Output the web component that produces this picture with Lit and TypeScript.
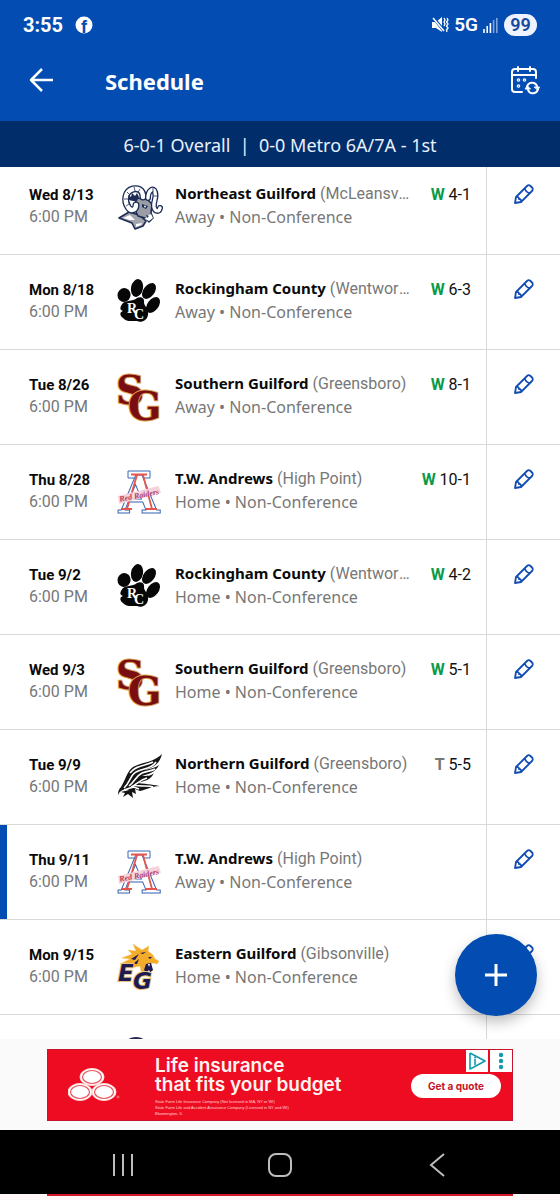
import { LitElement, html, css, svg, nothing } from "lit";
import { customElement, property } from "lit/decorators.js";

type Team = "rams" | "paw" | "sg" | "andrews" | "hawk" | "eg" | "crest";

interface Game {
  date: string;
  team: string;
  city: string;
  site: string;
  logo: Team;
  result?: string;
  score?: string;
  next?: boolean;
}

const GAMES: Game[] = [
  { date: "Wed 8/13", team: "Northeast Guilford", city: "McLeansville", site: "Away", logo: "rams", result: "W", score: "4-1" },
  { date: "Mon 8/18", team: "Rockingham County", city: "Wentworth", site: "Away", logo: "paw", result: "W", score: "6-3" },
  { date: "Tue 8/26", team: "Southern Guilford", city: "Greensboro", site: "Away", logo: "sg", result: "W", score: "8-1" },
  { date: "Thu 8/28", team: "T.W. Andrews", city: "High Point", site: "Home", logo: "andrews", result: "W", score: "10-1" },
  { date: "Tue 9/2", team: "Rockingham County", city: "Wentworth", site: "Home", logo: "paw", result: "W", score: "4-2" },
  { date: "Wed 9/3", team: "Southern Guilford", city: "Greensboro", site: "Home", logo: "sg", result: "W", score: "5-1" },
  { date: "Tue 9/9", team: "Northern Guilford", city: "Greensboro", site: "Home", logo: "hawk", result: "T", score: "5-5" },
  { date: "Thu 9/11", team: "T.W. Andrews", city: "High Point", site: "Away", logo: "andrews", next: true },
  { date: "Mon 9/15", team: "Eastern Guilford", city: "Gibsonville", site: "Home", logo: "eg" },
  { date: "Wed 9/17", team: "Southwest Guilford", city: "Kernersville", site: "Away", logo: "crest" },
];

const ART = {
  rams: svg`
    <g stroke="#1c2c55" stroke-width="1.600" stroke-linejoin="round">
      <path fill="#a2a5ad" d="M2 34 L12 28 L22 31 L29 37 L26 42 L18 45 L15 39 Z"/>
      <path fill="#9a9da6" d="M19 14 L30 15 L35 20 L34 29 L36 34 L32 38 L28 34 L21 32 L18 26 Z"/>
    </g>
    <path fill="#fff" d="M6 34 L13 31 L18 36 L13 36 Z M30 32 L34 30 L36 34 L32 37 L28 35 Z M19 40 L25 39 L24 41 L19 43 Z"/>
    <g fill="none" stroke-linecap="round">
      <path stroke="#1c2c55" stroke-width="7" d="M26 13 C26 5 20 4 16 5 C8 7 7 17 11 23 C14 28 19 26 19 21"/>
      <path stroke="#fff" stroke-width="4.400" d="M26 13 C26 5 20 4 16 5 C8 7 7 17 11 23 C14 28 19 26 19 21"/>
      <path stroke="#1c2c55" stroke-width="6" d="M31 14 C31 6 37 3 38 8 C40 14 36 17 37 23 C38 28 42 28 43 24"/>
      <path stroke="#fff" stroke-width="3.400" d="M31 14 C31 6 37 3 38 8 C40 14 36 17 37 23 C38 28 42 28 43 24"/>
      <path stroke="#1c2c55" stroke-width="0.800" stroke-linecap="butt" d="M10 8 L13 11 M17 3 L18 7 M7 15 L11 15 M9 22 L12 20 M23 5 L21 8 M36 4 L36 8 M41 12 L37 12"/>
    </g>
    <path fill="#1c2c55" d="M12 16 L11 11 L14 13 L15 9 L18 12 L20 9 L22 13 L20 17 L16 17 Z M25 20 L31 22 L29 25 L25 23 Z M29 31 L32 32 L30 34 Z"/>
    <circle cx="28" cy="22.500" r="0.900" fill="#fff"/>`,
  paw: svg`
    <g fill="#070707">
      <ellipse cx="7" cy="16" rx="6.500" ry="7" transform="rotate(20 7 16)"/>
      <ellipse cx="20" cy="9" rx="6" ry="9" transform="rotate(12 20 9)"/>
      <ellipse cx="32" cy="12" rx="5.500" ry="9" transform="rotate(38 32 12)"/>
      <ellipse cx="36" cy="26" rx="5.500" ry="9" transform="rotate(38 36 26)"/>
      <path d="M4 27 C7 20 16 23 20 19 C24 17 28 19 27 24 C28 28 32 30 31 36 C30 42 24 44 20 42 C14 42 9 43 6 39 C2 36 3 33 6 32 C3 31 3 29 4 27 Z"/>
    </g>
    <text class="rc" x="10" y="34">R</text>
    <text class="rc" x="17" y="40">C</text>`,
  sg: svg`
    <text class="block" x="-1" y="30">S</text>
    <text class="block" x="11" y="46">G</text>`,
  andrews: svg`
    <path fill="#fff" stroke="#3a68b4" d="M11 2 H33 V9 H11 Z"/>
    <text class="slab" x="22" y="44" text-anchor="middle">A</text>
    <path fill="none" stroke="#e5544f" stroke-width="1.800" d="M14 5.500 H30 M20 6 L10 40 M26 6 L35 40 M5 40 H15 M29 40 H40"/>
    <g transform="rotate(-11 22 26)">
      <path fill="#f6d3dc" d="M1 23 L43 21 L44 28 L1 31 Z"/>
      <text class="script" x="22" y="29" text-anchor="middle">Red Raiders</text>
    </g>`,
  hawk: svg`
    <path fill="#151515" d="M4 33 C9 25 10 17 16 13 C24 8 36 9 45 0 C42 12 34 14 26 16 C33 15 38 14 42 11 C38 19 31 20 25 22 C30 22 34 22 37 19 C34 26 27 27 21 29 C31 30 38 31 43 32 C34 32 29 36 23 37 L18 35 L19 40 L15 38 L16 44 L11 40 L6 43 L8 39 L4 38 C6 37 10 37 12 36 C8 34 3 36 1 41 C1 37 2 35 4 33 Z"/>
    <path fill="none" stroke="#fff" stroke-width="1.600" d="M7 34 C13 29 13 21 19 18 C26 14 35 15 39 8 M12 32 C18 27 19 22 25 19 C30 17 35 17 38 15 M14 33 C19 31 22 26 30 24 M13 19 C19 11 28 12 36 8 M17 31 C24 33 31 31 36 33 M7 36 L13 34 L17 33 L22 35"/>`,
  eg: svg`
    <path fill="#f3ab2a" stroke="#f7c769" stroke-width="0.500" d="M3 20 L13 15 L5 14 L15 10 L11 6 L19 7 L16 0 L25 6 L32 2 L31 7 L36 11 L38 15 L42 17 L40 20 L36 19 L31 21 L36 26 L31 30 L24 27 L23 22 L14 24 L14 20 Z"/>
    <path fill="#1e1b52" d="M14 15 L22 10 L18 16 Z M16 20 L22 15 L20 20 Z M23 9 L29 8 L26 10 Z M31 13 L35 13 L33 15 Z M29 20 L34 19 L36 26 L31 30 L27 26 Z"/>
    <path fill="#fff" d="M31 20 L33 20 L32 23 Z M30 28 L32 26 L33 28 Z"/>
    <text class="eg" x="1" y="37">E</text>
    <text class="eg" x="16" y="45">G</text>`,
  crest: svg`<circle cx="19" cy="13" r="15" fill="#26264f"/>`,
};

@customElement("team-logo")
class TeamLogo extends LitElement {
  @property() team: Team = "rams";

  static styles = css`
    :host { display: block; }
    .art { display: block; width: 46px; height: 46px; overflow: visible; }
    .rc { font: 700 14px "Liberation Serif", serif; fill: #fff; }
    .block {
      font: 700 39px "DejaVu Serif", serif; fill: #790e12;
      stroke: #dd9a4c; stroke-width: 2px; paint-order: stroke;
    }
    .slab {
      font: 700 53px "DejaVu Serif", serif; fill: #fff;
      stroke: #3a68b4; stroke-width: 1px;
    }
    .script { font: italic 700 8px "Liberation Serif", serif; fill: #b03a5c; }
    .eg {
      font: italic 700 23px "DejaVu Sans", sans-serif; fill: #1e1b52;
      stroke: #edc47d; stroke-width: 2px; paint-order: stroke;
    }
  `;

  render() {
    return html`<svg class="art" viewBox="0 0 46 46" aria-hidden="true">${ART[this.team]}</svg>`;
  }
}

@customElement("game-row")
class GameRow extends LitElement {
  @property({ attribute: false }) game!: Game;

  static styles = css`
    :host { display: block; }
    .row {
      display: flex; height: 95px; box-sizing: border-box;
      border-bottom: 1px solid #d9d9d9;
      font: 16px/22px Roboto, sans-serif; color: #777;
    }
    .mark { width: 7px; flex: none; }
    .mark.on { background: #024cb2; }
    .when { width: 88px; flex: none; padding: 24px 0 0 22px; }
    .date { font-size: 15px; font-weight: 700; color: #0a0a0a; }
    .logo { width: 46px; flex: none; padding: 24px 12px 0 0; }
    .info { flex: 1; min-width: 0; padding-top: 21px; }
    .line { display: flex; gap: 4px; align-items: baseline; line-height: 24px; }
    .team { flex: none; font: 700 15px/24px "Noto Sans", sans-serif; color: #0a0a0a; }
    .city { flex: 1; min-width: 0; overflow: hidden; white-space: nowrap; text-overflow: ellipsis; line-height: 24px; }
    .site { font: 16px/22px "Noto Sans", sans-serif; white-space: nowrap; }
    .score { width: 59px; flex: none; padding: 24px 15px 0 0; text-align: right; color: #111; white-space: nowrap; }
    .res { font-weight: 700; color: #777; }
    .res.win { color: #0b9a48; }
    .side { width: 74px; box-sizing: border-box; flex: none; border-left: 1px solid #d9d9d9; }
    .edit {
      display: flex; justify-content: center; width: 100%; height: 100%;
      padding: 24px 0 0; border: 0; background: none; cursor: pointer;
    }
    .pen { width: 20px; height: 20px; fill: none; stroke: #124cb3; stroke-width: 1.8; stroke-linejoin: round; stroke-linecap: round; }
  `;

  render() {
    const g = this.game;
    return html`<div class="row">
      <div class="mark ${g.next ? "on" : ""}"></div>
      <div class="when"><div class="date">${g.date}</div><div>6:00 PM</div></div>
      <team-logo class="logo" .team=${g.logo}></team-logo>
      <div class="info">
        <div class="line"><span class="team">${g.team}</span><span class="city">(${g.city})</span></div>
        <div class="site">${g.site} • Non-Conference</div>
      </div>
      <div class="score">${g.result
        ? html`<span class="res ${g.result === "W" ? "win" : ""}">${g.result}</span> ${g.score}`
        : nothing}</div>
      <div class="side">
        <button class="edit" aria-label="Edit game">
          <svg class="pen" viewBox="0 0 20 20"><path d="M1 19 L2 13 L13 2 C14 1 15.500 1 16.500 2 L18 3.500 C19 4.500 19 6 18 7 L7 18 Z M2 13 C4 12.500 5 13.500 5 15 C6.500 15 7.500 16 7 18 M10.500 4.500 C12 8 13 8.500 15.500 9.500"/></svg>
        </button>
      </div>
    </div>`;
  }
}

@customElement("app-root")
class AppRoot extends LitElement {
  static styles = css`
    :host {
      display: flex; flex-direction: column; height: 100vh; position: relative;
      background: #fff; font-family: Roboto, sans-serif;
    }
    button { font-family: inherit; border: 0; padding: 0; background: none; cursor: pointer; }
    svg { display: block; }
    .status {
      display: flex; align-items: center; height: 49px; flex: none; box-sizing: border-box;
      padding: 0 23px; background: #024cb2; color: #fff; font: 700 20px/24px Roboto, sans-serif;
    }
    .fb { width: 18px; height: 18px; margin-left: 12px; }
    .fb-f { font: 700 18px "Liberation Sans", sans-serif; fill: #024cb2; }
    .grow { flex: 1; }
    .mute { width: 17px; height: 16px; margin-right: 5px; }
    .net { font-size: 19px; font-weight: 600; }
    .bars { width: 15px; height: 16px; margin: 0 6px 0 5px; }
    .batt {
      width: 33px; height: 22px; border-radius: 11px; background: #eef3ff; color: #174a9e;
      font: 600 18px/22px Roboto, sans-serif; text-align: center;
    }
    .bar {
      display: flex; align-items: center; height: 72px; flex: none; box-sizing: border-box;
      padding: 0 20px 10px 29px; background: #024cb2; color: #fff;
    }
    .title { margin: 0; padding: 2px 0 0 51px; flex: 1; font: 700 22px/30px "Noto Sans", sans-serif; }
    .back { width: 25px; height: 24px; fill: none; stroke: #fff; stroke-width: 2.5; stroke-linejoin: round; }
    .cal { width: 30px; height: 29px; fill: none; stroke: #fff; stroke-width: 2; stroke-linecap: round; }
    .record {
      height: 46px; flex: none; background: #012d6a; color: #e9f1fb; white-space: pre;
      text-align: center; font: 18px/48px "Noto Sans", sans-serif;
    }
    .scroll { flex: 1; min-height: 0; overflow: hidden; }
    .list { list-style: none; margin: -7px 0 0; padding: 0; }
    .foot { flex: none; position: relative; background: #fafafa; padding: 10px 0 9px; }
    .fab {
      position: absolute; right: 23px; bottom: 114px; width: 82px; height: 82px; border-radius: 50%;
      background: #024cb2; display: grid; place-items: center;
      box-shadow: 0 6px 14px rgba(0, 0, 0, 0.26);
      clip-path: inset(-30px -30px -22px -30px);
    }
    .plus { width: 22px; height: 22px; stroke: #fff; stroke-width: 3; }
    .ad {
      position: relative; box-sizing: border-box; width: 466px; max-width: 100%; height: 72px; margin: 0 auto;
      display: flex; align-items: flex-start; background: #ee0c22; border: 1px solid #c9152b; color: #fff;
    }
    .farm { width: 52px; height: 34px; margin: 18px 0 0 20px; }
    .copy { flex: 1; padding: 6px 0 0 35px; white-space: nowrap; color: #fff3f1; }
    .head { margin: 0; font: 600 19px/19px Inter, sans-serif; }
    .fine { margin: 5px 0 0; font: 4px/6px "Liberation Sans", sans-serif; color: #ffd6d3; }
    .quote {
      margin: 24px 11px 0 0; width: 90px; height: 24px; border-radius: 12px; background: #fff;
      color: #c4132a; font: 700 10px/24px Inter, sans-serif;
    }
    .tags { position: absolute; top: 0; right: 0; display: flex; gap: 2px; }
    .tag { width: 22px; height: 22px; background: #fff; }
    .nav {
      display: grid; grid-template-columns: 1fr 1fr 1fr; height: 64px; flex: none; background: #000;
      box-sizing: border-box; padding: 0 44px; place-items: center; margin: 0;
    }
    .key { width: 24px; height: 24px; fill: none; stroke: #bdbdbd; stroke-width: 2; margin-top: 6px; }
    .peek { flex: none; height: 6px; background: #fdf7f7; display: flex; justify-content: center; }
    .edge { width: 466px; height: 2px; background: #d3182c; }
  `;

  render() {
    return html`
      <div class="status">
        <span>3:55</span>
        <svg class="fb" viewBox="0 0 18 18"><circle cx="9" cy="9" r="8.500" fill="#fff"/><text class="fb-f" x="6" y="17">f</text></svg>
        <span class="grow"></span>
        <svg class="mute" viewBox="0 0 17 16"><path fill="#fff" d="M0 5 H4 L10 0 V15 L4 11 H0 Z"/><path d="M1 0 L12 14" stroke="#024cb2" stroke-width="3"/><path d="M1 1 L12 14" stroke="#fff" stroke-width="1.500"/><path fill="none" stroke="#fff" stroke-width="1.300" d="M12 1 L13 3 L12 5 L13 7 L12 9 M15 1 L16 3 L14.500 5 L16 7 L14.500 9 L16 11 L14.500 13 L15 15"/></svg>
        <span class="net">5G</span>
        <svg class="bars" viewBox="0 0 15 16"><path stroke="#fff" stroke-width="1.600" d="M1 16 V12 M4.200 16 V9 M7.400 16 V6"/><path stroke="#7ea3dc" stroke-width="1.600" d="M10.600 16 V3 M13.800 16 V1"/></svg>
        <span class="batt">99</span>
      </div>
      <header class="bar">
        <button aria-label="Back"><svg class="back" viewBox="0 0 25 24"><path d="M13 1 L2 12 L13 23 M2 12 H24"/></svg></button>
        <h1 class="title">Schedule</h1>
        <button aria-label="Sync calendar">
          <svg class="cal" viewBox="0 0 30 29"><path d="M12 26 H5 C3 26 2 25 2 23 V6 C2 4 3 3 5 3 H23 C25 3 26 4 26 6 V12 M2 9 H26 M8 1 V5 M20 1 V5"/><g stroke-width="1.200"><circle cx="8.500" cy="14" r="1.200"/><circle cx="14.500" cy="14" r="1.200"/><circle cx="8.500" cy="20" r="1.200"/></g><path d="M17 21 C18 16 25 15 27 20 M28 23 C27 28 20 29 18 24"/><path fill="#fff" stroke-width="1" d="M24.500 21 L29.500 21 L28 24 Z M15.500 23 L20.500 23 L17.500 20 Z"/></svg>
        </button>
      </header>
      <div class="record">6-0-1 Overall  |  0-0 Metro 6A/7A - 1st</div>
      <main class="scroll">
        <ul class="list">${GAMES.map((g) => html`<li><game-row .game=${g}></game-row></li>`)}</ul>
      </main>
      <div class="foot">
        <button class="fab" aria-label="Add game"><svg class="plus" viewBox="0 0 22 22"><path d="M11 0 V22 M0 11 H22"/></svg></button>
        <div class="ad">
          <svg class="farm" viewBox="0 0 52 34">
            <g fill="#fff" stroke="#ffd9d6" stroke-width="1"><ellipse cx="24" cy="9" rx="12" ry="8.500"/><ellipse cx="12" cy="24" rx="12" ry="8.500"/><ellipse cx="36" cy="24" rx="12" ry="8.500"/></g>
            <g fill="#fff" stroke="#e5515c" stroke-width="1.200"><ellipse cx="24" cy="9" rx="9.500" ry="6.500"/><ellipse cx="12" cy="24" rx="9.500" ry="6.500"/><ellipse cx="36" cy="24" rx="9.500" ry="6.500"/></g>
            <circle cx="50" cy="29" r="1" fill="none" stroke="#ffb0b0" stroke-width="0.600"/>
          </svg>
          <div class="copy">
            <p class="head">Life insurance<br>that fits your budget</p>
            <p class="fine">State Farm Life Insurance Company (Not licensed in MA, NY or WI)<br>State Farm Life and Accident Assurance Company (Licensed in NY and WI)<br>Bloomington, IL</p>
          </div>
          <button class="quote">Get a quote</button>
          <div class="tags">
            <svg class="tag" viewBox="0 0 22 22"><path fill="none" stroke="#129aae" stroke-width="1.600" stroke-linejoin="round" d="M4 3 L19 11 L8 17 M4 3 V19 L8 17 M9 9 V15"/><circle cx="9" cy="7.500" r="1" fill="#129aae"/></svg>
            <svg class="tag" viewBox="0 0 22 22" fill="#129aae"><circle cx="11" cy="5" r="2.200"/><circle cx="11" cy="11" r="2.200"/><circle cx="11" cy="17" r="2.200"/></svg>
          </div>
        </div>
      </div>
      <nav class="nav">
        <button aria-label="Recents"><svg class="key" viewBox="0 0 24 24"><path d="M3 1 V23 M12 1 V23 M21 1 V23"/></svg></button>
        <button aria-label="Home"><svg class="key" viewBox="0 0 24 24"><rect x="1" y="1" width="22" height="22" rx="7"/></svg></button>
        <button aria-label="Back"><svg class="key" viewBox="0 0 24 24"><path d="M19 1 L6 12 L19 23"/></svg></button>
      </nav>
      <div class="peek"><div class="edge"></div></div>
    `;
  }
}
